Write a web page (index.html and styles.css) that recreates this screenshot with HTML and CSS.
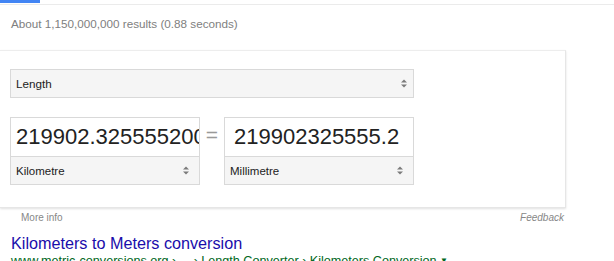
FILE: index.html
```html
<!DOCTYPE html>
<html lang="en">

<head>
    <meta charset="UTF-8">
    <meta name="viewport" content="width=device-width, initial-scale=1.0">
    <title>Unit converter</title>

    <link rel="stylesheet" href="styles.css">
</head>

<body>
    <header class="topbar">
        <span class="tab-line"></span>
    </header>
    <main>
        <p class="stats">About 1,150,000,000 results (0.88 seconds)</p>

        <section class="card">
            <div class="select wide">
                <span>Length</span>
                <svg class="arrows" width="6" height="9" viewBox="0 0 6 9">
                    <polygon points="0,3.5 3,0.5 6,3.5" />
                    <polygon points="0,5.5 3,8.5 6,5.5" />
                </svg>
            </div>
            <div class="convert-row">
                <div class="unit">
                    <input class="value" type="text" value="219902.325555200" readonly>
                    <div class="select">
                        <span>Kilometre</span>
                        <svg class="arrows" width="6" height="9" viewBox="0 0 6 9">
                            <polygon points="0,3.5 3,0.5 6,3.5" />
                            <polygon points="0,5.5 3,8.5 6,5.5" />
                        </svg>
                    </div>
                </div>
                <div class="equals">=</div>
                <div class="unit">
                    <input class="value right" type="text" value="219902325555.2" readonly>
                    <div class="select">
                        <span>Millimetre</span>
                        <svg class="arrows" width="6" height="9" viewBox="0 0 6 9">
                            <polygon points="0,3.5 3,0.5 6,3.5" />
                            <polygon points="0,5.5 3,8.5 6,5.5" />
                        </svg>
                    </div>
                </div>
            </div>
        </section>

        <div class="card-foot">
            <a href="#">More info</a>
            <a href="#" class="feedback">Feedback</a>
        </div>

        <article class="result">
            <a href="#" class="title">Kilometers to Meters conversion</a>
            <p class="url">www.metric-conversions.org › ... › Length Converter › Kilometers Conversion <span class="drop">▼</span></p>
        </article>
    </main>
</body>

</html>
```

FILE: styles.css
```css
* {
    padding: 0;
    margin: 0;
    box-sizing: border-box;
    font-family: "Liberation Sans", Arial, sans-serif;
}

body {
    width: 614px;
    height: 261px;
    overflow: hidden;
    background-color: white;
}

a {
    text-decoration: none;
}

.topbar {
    height: 5px;
    border-bottom: 1px solid #ebebeb;
}

.topbar .tab-line {
    display: block;
    width: 40px;
    height: 3px;
    background-color: #4285f4;
}

.stats {
    margin: 12px 0 0 11px;
    font-size: 11.7px;
    line-height: 14px;
    color: #808080;
}

.card {
    width: 566px;
    margin-top: 19px;
    padding: 18px 0 22px 10px;
    border: 1px solid #e6e6e6;
    border-left: none;
    border-top-color: #ededed;
    box-shadow: 0 1px 2px rgba(0, 0, 0, 0.12);
}

.select {
    height: 29px;
    display: flex;
    align-items: center;
    justify-content: space-between;
    padding: 0 9px 0 5px;
    background-color: #f5f5f5;
    border: 1px solid #d9d9d9;
    font-size: 11.5px;
    color: #222;
}

.select.wide {
    width: 404px;
    padding-right: 6px;
    font-size: 11.7px;
}

.select .arrows {
    fill: #7a7a7a;
}

.convert-row {
    display: flex;
    margin-top: 19px;
}

.unit {
    width: 190px;
    display: flex;
    flex-direction: column;
    border: 1px solid #d9d9d9;
}

.unit .value {
    width: 100%;
    height: 38px;
    border: none;
    outline: none;
    padding: 0 0 0 5px;
    font-size: 22px;
    color: #222;
    background-color: white;
}

.unit .value.right {
    padding-left: 9px;
}

.unit .select {
    height: 28px;
    border: none;
    border-top: 1px solid #d9d9d9;
    padding-right: 10px;
}

.equals {
    width: 24px;
    height: 38px;
    line-height: 36px;
    text-align: center;
    font-size: 21px;
    color: #999;
}

.card-foot {
    width: 566px;
    margin-top: 4px;
    display: flex;
    justify-content: space-between;
    padding: 0 2px 0 21px;
    font-size: 10px;
    line-height: 12px;
}

.card-foot a {
    color: #878787;
}

.card-foot a.feedback {
    font-style: italic;
}

.result {
    margin: 10px 0 0 11px;
}

.result .title {
    display: block;
    font-size: 16.2px;
    line-height: 19px;
    color: #1a0dab;
}

.result .url {
    font-size: 12.6px;
    line-height: 15px;
    color: #006621;
    white-space: nowrap;
}

.result .url .drop {
    font-size: 8px;
    vertical-align: 2px;
}
```
